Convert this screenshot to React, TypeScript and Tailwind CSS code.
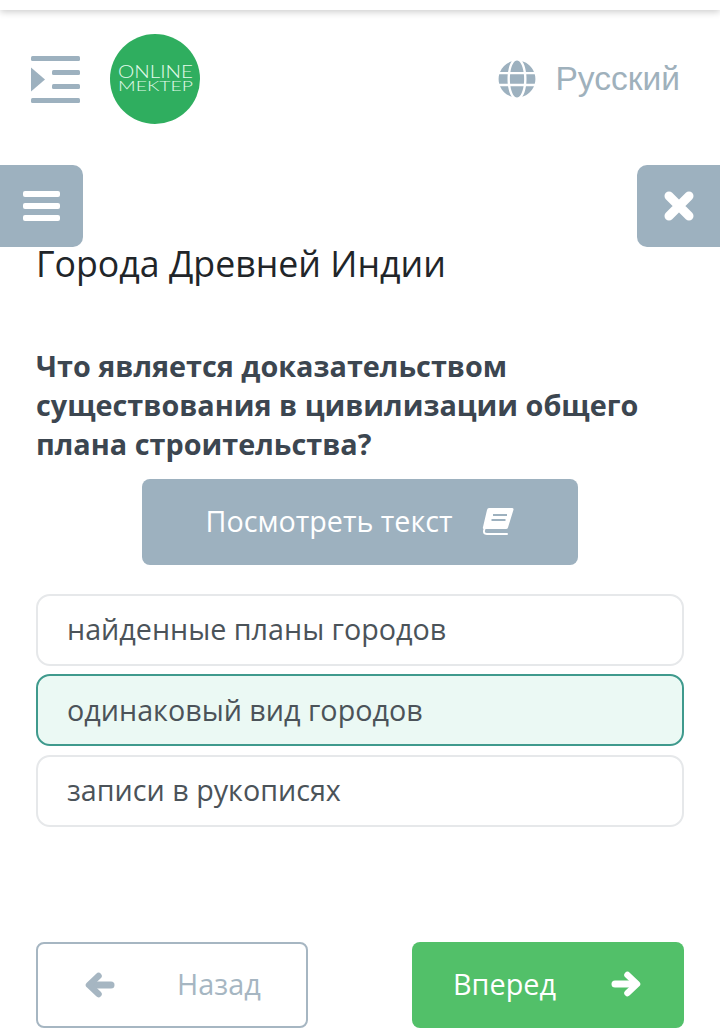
import React from 'react';
import { FaGlobe } from 'react-icons/fa';

const openSans = "font-['Open_Sans',sans-serif]";

const MenuIcon: React.FC = () => (
  <svg width="49" height="47" viewBox="0 0 49 47" className="text-[#9db1bf]" fill="currentColor">
    <rect x="0" y="0" width="49" height="5" rx="1.5" />
    <path d="M0 11.5 L14 23.5 L0 35.5 Z" />
    <rect x="21" y="14" width="28" height="5" rx="1.5" />
    <rect x="21" y="28" width="28" height="5" rx="1.5" />
    <rect x="0" y="42" width="49" height="5" rx="1.5" />
  </svg>
);

const Logo: React.FC = () => (
  <div className="w-[90px] h-[90px] rounded-full bg-[#2fae5f] flex items-center justify-center">
    <svg width="80" height="34" viewBox="0 0 80 34" fill="#e4fbec" fontFamily="Lato, sans-serif" fontWeight="300">
      <text x="3" y="16" fontSize="17" textLength="75" lengthAdjust="spacingAndGlyphs">ONLINE</text>
      <text x="3" y="29" fontSize="14" textLength="75" lengthAdjust="spacingAndGlyphs">MEKTEP</text>
    </svg>
  </div>
);

const BookIcon: React.FC = () => (
  <svg width="32" height="28" viewBox="0 0 32 28">
    <path
      d="M7 1 H30 Q32 1 31.4 3 L26 20.5 Q25.6 22 24 22 H2 Q0.4 22 1 20 L5 3 Q5.4 1 7 1 Z"
      fill="white"
    />
    <path d="M11 8 H25 M9.5 13 H23.5" stroke="#9db1bf" strokeWidth="2" fill="none" />
    <path d="M2.5 22 Q0.5 27 5 27 H25" stroke="white" strokeWidth="2" fill="none" strokeLinecap="round" />
  </svg>
);

const ArrowLeft: React.FC = () => (
  <svg width="30" height="26" viewBox="0 0 30 26" fill="none" stroke="currentColor" strokeLinecap="round" strokeLinejoin="round">
    <path d="M6 13 H26" strokeWidth="7" />
    <path d="M13.5 4 L4 13 L13.5 22" strokeWidth="6.5" />
  </svg>
);

const ArrowRight: React.FC = () => (
  <svg width="30" height="26" viewBox="0 0 30 26" fill="none" stroke="currentColor" strokeLinecap="round" strokeLinejoin="round">
    <path d="M4 13 H24" strokeWidth="7" />
    <path d="M16.5 4 L26 13 L16.5 22" strokeWidth="6.5" />
  </svg>
);

const CloseIcon: React.FC = () => (
  <svg width="30" height="30" viewBox="0 0 30 30" fill="none" stroke="white" strokeWidth="9" strokeLinecap="round">
    <path d="M5 5 L25 25 M25 5 L5 25" />
  </svg>
);

const answers = [
  { text: 'найденные планы городов', selected: false },
  { text: 'одинаковый вид городов', selected: true },
  { text: 'записи в рукописях', selected: false },
];

const App: React.FC = () => {
  return (
    <div className={`w-[720px] h-[1034px] overflow-hidden bg-white ${openSans}`}>
      <div className="h-[10px] bg-white shadow-[0_2px_7px_rgba(0,0,0,0.2)]" />

      <header className="flex items-center justify-between pt-[24px] pl-[31px] pr-[40px]">
        <div className="flex items-center gap-[30px]">
          <MenuIcon />
          <Logo />
        </div>
        <div className="flex items-center gap-[19px] text-[#9db1bf]">
          <FaGlobe size={38} />
          <span className="font-['Liberation_Sans',sans-serif] text-[33.6px] leading-none text-[#9fb1bc]">Русский</span>
        </div>
      </header>

      <div className="flex justify-between mt-[41px]">
        <button className="w-[83px] h-[82px] bg-[#9db1bf] rounded-r-[10px] flex flex-col items-center justify-center gap-[6px]">
          <span className="w-[37px] h-[6px] bg-white rounded-[2px]" />
          <span className="w-[37px] h-[6px] bg-white rounded-[2px]" />
          <span className="w-[37px] h-[6px] bg-white rounded-[2px]" />
        </button>
        <button className="w-[83px] h-[82px] bg-[#9db1bf] rounded-l-[10px] flex items-center justify-center">
          <CloseIcon />
        </button>
      </div>

      <main className="px-[36px]">
        <h1 className="text-[35.7px] leading-[32px] text-[#212529]">Города Древней Индии</h1>

        <p className="mt-[67px] text-[28.8px] leading-[39px] font-bold text-[#3c4650]">
          Что является доказательством существования в цивилизации общего плана строительства?
        </p>

        <div className="flex justify-center mt-[16px]">
          <button className="w-[436px] h-[86px] pb-[2px] bg-[#9db1bf] rounded-[8px] text-white text-[28.7px] flex items-center justify-center gap-[30px]">
            Посмотреть текст
            <BookIcon />
          </button>
        </div>

        <div className="flex flex-col gap-[8.4px] mt-[29px]">
          {answers.map(a => (
            <div
              key={a.text}
              className={`h-[72px] pb-[2px] rounded-[14px] border-2 flex items-center px-[29px] text-[28.7px] text-[#4b5359] ${
                a.selected ? 'border-[#3f9a8d] bg-[#ebf9f4]' : 'border-[#e6e8ea] bg-white'
              }`}
            >
              {a.text}
            </div>
          ))}
        </div>

        <div className="flex justify-between mt-[115px]">
          <button className="w-[272px] h-[86px] rounded-[8px] border-2 border-[#a6b6c2] bg-white text-[#a6b6c2] text-[28.8px] flex items-center pl-[47px] gap-[62px]">
            <ArrowLeft />
            <span className="pb-[2px]">Назад</span>
          </button>
          <button className="w-[272px] h-[86px] rounded-[8px] bg-[#52c069] text-white text-[28.8px] flex items-center justify-between pl-[41px] pr-[43px]">
            <span className="pb-[2px]">Вперед</span>
            <span className="-mt-[2px]"><ArrowRight /></span>
          </button>
        </div>
      </main>
    </div>
  );
};

export default App;
